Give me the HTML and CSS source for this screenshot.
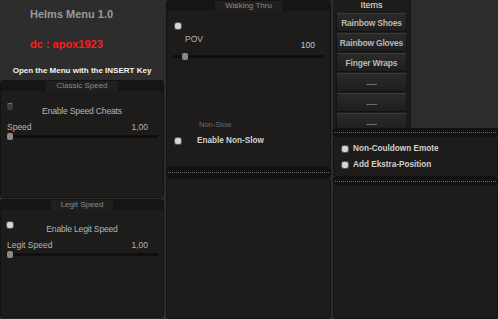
FILE: index.html
```html
<!DOCTYPE html>
<html lang="en">
<head>
    <meta charset="UTF-8">
    <meta name="viewport" content="width=device-width, initial-scale=1.0">
    <title>Helms Menu</title>
    <link rel="stylesheet" href="styles.css">
</head>
<body>
    <div class="menu">
        <div class="col">
            <div class="intro">
                <div class="title">Helms Menu 1.0</div>
                <div class="discord">dc : apox1923</div>
                <div class="hint">Open the Menu with the INSERT Key</div>
            </div>
            <div class="panel speed">
                <div class="panel-head"><span>Classic Speed</span></div>
                <div class="panel-body">
                    <span class="check off"></span>
                    <div class="check-label">Enable Speed Cheats</div>
                    <div class="value-row"><span>Speed</span><span>1,00</span></div>
                    <div class="slider"><span class="knob"></span></div>
                </div>
            </div>
            <div class="panel speed">
                <div class="panel-head"><span>Legit Speed</span></div>
                <div class="panel-body">
                    <span class="check"></span>
                    <div class="check-label">Enable Legit Speed</div>
                    <div class="value-row"><span>Legit Speed</span><span>1,00</span></div>
                    <div class="slider"><span class="knob"></span></div>
                </div>
            </div>
        </div>

        <div class="col">
            <div class="panel walk">
                <div class="panel-head"><span>Walking Thru</span></div>
                <div class="panel-body">
                    <span class="check"></span>
                    <div class="pov-label">POV</div>
                    <div class="pov-value">100</div>
                    <div class="slider"><span class="knob pov"></span></div>
                    <div class="group-label">Non-Slow</div>
                    <div class="option">
                        <span class="check"></span>
                        <span>Enable Non-Slow</span>
                    </div>
                </div>
            </div>
            <div class="separator"></div>
            <div class="panel fill"></div>
        </div>

        <div class="col">
            <div class="top-row">
                <div class="items">
                    <div class="items-head">Items</div>
                    <button class="item-btn">Rainbow Shoes</button>
                    <button class="item-btn">Rainbow Gloves</button>
                    <button class="item-btn">Finger Wraps</button>
                    <button class="item-btn dots">......</button>
                    <button class="item-btn dots">......</button>
                    <button class="item-btn dots">......</button>
                </div>
            </div>
            <div class="separator short"></div>
            <div class="panel extras">
                <div class="option">
                    <span class="check"></span>
                    <span>Non-Couldown Emote</span>
                </div>
                <div class="option">
                    <span class="check"></span>
                    <span>Add Ekstra-Position</span>
                </div>
            </div>
            <div class="separator short"></div>
            <div class="panel fill"></div>
        </div>
    </div>
</body>
</html>
```

FILE: styles.css
```css
body {
    margin: 0;
    background: #2d2d2d;
    font-family: "Liberation Sans", Arial, sans-serif;
    overflow: hidden;
}
.menu {
    display: grid;
    grid-template-columns: 164px 165px 165px;
    column-gap: 2px;
    height: 319px;
}
.col {
    display: flex;
    flex-direction: column;
    min-height: 0;
}

/* intro block */
.intro {
    height: 80px;
    padding-top: 8px;
    box-sizing: border-box;
}
.title {
    margin-left: 30px;
    font-size: 11px;
    font-weight: bold;
    line-height: 12px;
    color: #9a9a9a;
}
.discord {
    margin: 18px 0 0 30px;
    font-size: 11px;
    font-weight: bold;
    line-height: 12px;
    color: #ff1c1c;
}
.hint {
    margin-top: 16px;
    text-align: center;
    font-size: 8px;
    font-weight: bold;
    line-height: 10px;
    color: #f4f4f4;
}

/* panels */
.panel {
    background: #1d1c1b;
    border: 1px solid #131313;
    border-radius: 3px;
    box-sizing: border-box;
}
.speed {
    height: 119px;
    margin-bottom: 1px;
}
.panel-head {
    height: 10px;
    background: #151515;
    text-align: center;
    font-size: 8px;
    line-height: 10px;
    color: #8a8a8a;
}
.panel-head span {
    display: inline-block;
    padding: 0 10px;
    background: #1f1f1f;
}
.panel-body {
    padding: 12px 5px 0 5px;
}
.check {
    display: block;
    flex: none;
    width: 6px;
    height: 6px;
    margin-left: 1px;
    border-radius: 2px;
    background: #d6d6d6;
    box-shadow: 0 0 0 1px #555;
}
.check.off {
    height: 7px;
    background: #3c3c3c;
    box-shadow: inset 0 3px 0 -2px #777;
}
.check-label {
    margin-top: -4px;
    text-align: center;
    font-size: 8.6px;
    letter-spacing: -0.2px;
    line-height: 10px;
    color: #b4b4b4;
}
.value-row {
    display: flex;
    justify-content: space-between;
    margin-top: 6px;
    padding: 0 10px 0 1px;
    font-size: 8.5px;
    line-height: 10px;
    color: #b4b4b4;
}
.slider {
    position: relative;
    height: 7px;
    margin-top: 1px;
}
.slider::before {
    content: "";
    display: block;
    position: absolute;
    left: 0;
    right: 0;
    top: 2px;
    height: 3px;
    background: #0f0f0f;
}
.knob {
    position: absolute;
    left: 1px;
    top: 0;
    width: 6px;
    height: 7px;
    border-radius: 2px;
    background: #8a8a8a;
}
.knob.pov {
    left: 9px;
}

/* walking thru */
.walk {
    height: 167px;
}
.walk .panel-body {
    padding: 12px 6px 0 6px;
}
.walk .check {
    margin-left: 2px;
}
.pov-label {
    margin-top: 5px;
    padding-left: 12px;
    font-size: 8.5px;
    line-height: 10px;
    color: #b4b4b4;
}
.pov-value {
    margin-top: -4px;
    padding-right: 9px;
    text-align: right;
    font-size: 8.5px;
    line-height: 10px;
    color: #c8c8c8;
}
.walk .slider {
    margin-top: 3px;
}
.group-label {
    margin: 60px 0 0 26px;
    font-size: 7.5px;
    line-height: 10px;
    color: #6c6c6c;
}
.option {
    display: flex;
    align-items: center;
    gap: 12px;
    font-size: 8.5px;
    font-weight: bold;
    line-height: 10px;
    color: #d2d2cc;
}
.walk .option {
    margin-top: 6px;
    gap: 16px;
    font-size: 8.2px;
}
.option .check {
    margin-left: 2px;
}

.separator {
    height: 11px;
    flex: none;
    background: #121212;
    display: flex;
    align-items: center;
    padding: 0 2px;
}
.separator::before {
    content: "";
    flex: 1;
    border-top: 1px dotted #6e6e6e;
}
.separator.short {
    height: 8px;
}
.fill {
    flex: 1;
}

/* items */
.top-row {
    height: 128px;
    flex: none;
    overflow: hidden;
}
.items {
    width: 78px;
    height: 140px;
    background: #1d1c1b;
    border-right: 1px solid #131313;
    padding: 0 3px;
    box-sizing: border-box;
}
.items-head {
    height: 13px;
    text-align: center;
    font-size: 9px;
    line-height: 11px;
    color: #ececec;
}
.item-btn {
    display: block;
    width: 100%;
    height: 19px;
    margin-bottom: 1px;
    padding: 0;
    background: linear-gradient(#2a2a2a, #1e1e1e);
    border: 1px solid #121212;
    border-top-color: #3a3a3a;
    border-radius: 2px;
    font-family: inherit;
    font-size: 8.5px;
    letter-spacing: -0.2px;
    font-weight: bold;
    color: #b8b8b4;
}
.item-btn.dots {
    font-size: 7px;
    color: #9a9a9a;
}

.extras {
    height: 41px;
    flex: none;
    padding: 7px 0 0 6px;
}
.extras .option {
    margin-bottom: 6px;
    gap: 5px;
    font-size: 8.2px;
}
```
